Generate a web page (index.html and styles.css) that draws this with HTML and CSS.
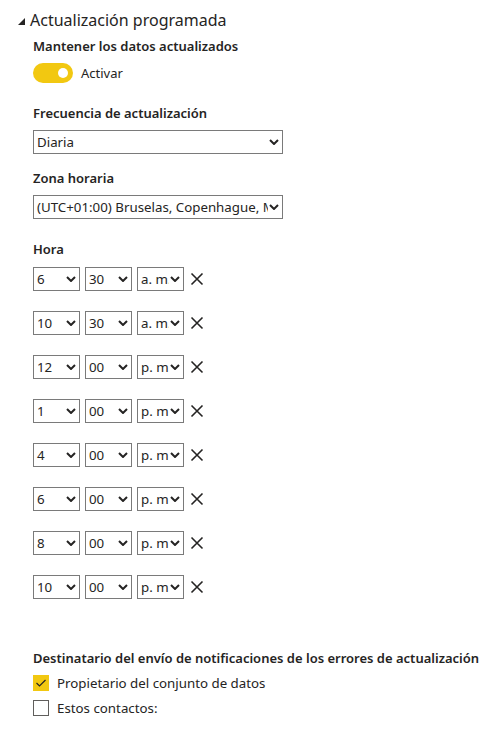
FILE: index.html
```html
<!DOCTYPE html>
<html lang="es">
<head>
<meta charset="utf-8">
<link rel="stylesheet" href="styles.css">
</head>
<body>
<div class="panel">
  <div class="section-title">
    <svg class="caret" width="7" height="7" viewBox="0 0 7 7"><path d="M7 0 L7 7 L0 7 Z" fill="#252423"/></svg>
    <span>Actualización programada</span>
  </div>
  <div class="content">
    <div class="label first">Mantener los datos actualizados</div>
    <div class="toggle-row">
      <div class="toggle"><span class="knob"></span></div>
      <span class="toggle-text">Activar</span>
    </div>

    <div class="label gap-lg">Frecuencia de actualización</div>
    <div class="select wide">
      <span class="value">Diaria</span>
      <svg class="chev" width="10" height="6" viewBox="0 0 10 6"><path d="M1 1 L5 5 L9 1" fill="none" stroke="#252423" stroke-width="2"/></svg>
    </div>

    <div class="label gap-md">Zona horaria</div>
    <div class="select wide">
      <span class="value">(UTC+01:00) Bruselas, Copenhague, Madrid, París</span>
      <svg class="chev" width="10" height="6" viewBox="0 0 10 6"><path d="M1 1 L5 5 L9 1" fill="none" stroke="#252423" stroke-width="2"/></svg>
    </div>

    <div class="label gap-lg">Hora</div>
    <div class="times">
      <div class="time-row">
        <div class="select small"><span class="value">6</span><svg class="chev" width="10" height="6" viewBox="0 0 10 6"><path d="M1 1 L5 5 L9 1" fill="none" stroke="#252423" stroke-width="2"/></svg></div>
        <div class="select small"><span class="value">30</span><svg class="chev" width="10" height="6" viewBox="0 0 10 6"><path d="M1 1 L5 5 L9 1" fill="none" stroke="#252423" stroke-width="2"/></svg></div>
        <div class="select small"><span class="value">a. m.</span><svg class="chev" width="10" height="6" viewBox="0 0 10 6"><path d="M1 1 L5 5 L9 1" fill="none" stroke="#252423" stroke-width="2"/></svg></div>
        <svg class="remove" width="14" height="14" viewBox="0 0 14 14"><path d="M1.5 1.5 L12.5 12.5 M12.5 1.5 L1.5 12.5" stroke="#252423" stroke-width="1.6"/></svg>
      </div>
      <div class="time-row">
        <div class="select small"><span class="value">10</span><svg class="chev" width="10" height="6" viewBox="0 0 10 6"><path d="M1 1 L5 5 L9 1" fill="none" stroke="#252423" stroke-width="2"/></svg></div>
        <div class="select small"><span class="value">30</span><svg class="chev" width="10" height="6" viewBox="0 0 10 6"><path d="M1 1 L5 5 L9 1" fill="none" stroke="#252423" stroke-width="2"/></svg></div>
        <div class="select small"><span class="value">a. m.</span><svg class="chev" width="10" height="6" viewBox="0 0 10 6"><path d="M1 1 L5 5 L9 1" fill="none" stroke="#252423" stroke-width="2"/></svg></div>
        <svg class="remove" width="14" height="14" viewBox="0 0 14 14"><path d="M1.5 1.5 L12.5 12.5 M12.5 1.5 L1.5 12.5" stroke="#252423" stroke-width="1.6"/></svg>
      </div>
      <div class="time-row">
        <div class="select small"><span class="value">12</span><svg class="chev" width="10" height="6" viewBox="0 0 10 6"><path d="M1 1 L5 5 L9 1" fill="none" stroke="#252423" stroke-width="2"/></svg></div>
        <div class="select small"><span class="value">00</span><svg class="chev" width="10" height="6" viewBox="0 0 10 6"><path d="M1 1 L5 5 L9 1" fill="none" stroke="#252423" stroke-width="2"/></svg></div>
        <div class="select small"><span class="value">p. m.</span><svg class="chev" width="10" height="6" viewBox="0 0 10 6"><path d="M1 1 L5 5 L9 1" fill="none" stroke="#252423" stroke-width="2"/></svg></div>
        <svg class="remove" width="14" height="14" viewBox="0 0 14 14"><path d="M1.5 1.5 L12.5 12.5 M12.5 1.5 L1.5 12.5" stroke="#252423" stroke-width="1.6"/></svg>
      </div>
      <div class="time-row">
        <div class="select small"><span class="value">1</span><svg class="chev" width="10" height="6" viewBox="0 0 10 6"><path d="M1 1 L5 5 L9 1" fill="none" stroke="#252423" stroke-width="2"/></svg></div>
        <div class="select small"><span class="value">00</span><svg class="chev" width="10" height="6" viewBox="0 0 10 6"><path d="M1 1 L5 5 L9 1" fill="none" stroke="#252423" stroke-width="2"/></svg></div>
        <div class="select small"><span class="value">p. m.</span><svg class="chev" width="10" height="6" viewBox="0 0 10 6"><path d="M1 1 L5 5 L9 1" fill="none" stroke="#252423" stroke-width="2"/></svg></div>
        <svg class="remove" width="14" height="14" viewBox="0 0 14 14"><path d="M1.5 1.5 L12.5 12.5 M12.5 1.5 L1.5 12.5" stroke="#252423" stroke-width="1.6"/></svg>
      </div>
      <div class="time-row">
        <div class="select small"><span class="value">4</span><svg class="chev" width="10" height="6" viewBox="0 0 10 6"><path d="M1 1 L5 5 L9 1" fill="none" stroke="#252423" stroke-width="2"/></svg></div>
        <div class="select small"><span class="value">00</span><svg class="chev" width="10" height="6" viewBox="0 0 10 6"><path d="M1 1 L5 5 L9 1" fill="none" stroke="#252423" stroke-width="2"/></svg></div>
        <div class="select small"><span class="value">p. m.</span><svg class="chev" width="10" height="6" viewBox="0 0 10 6"><path d="M1 1 L5 5 L9 1" fill="none" stroke="#252423" stroke-width="2"/></svg></div>
        <svg class="remove" width="14" height="14" viewBox="0 0 14 14"><path d="M1.5 1.5 L12.5 12.5 M12.5 1.5 L1.5 12.5" stroke="#252423" stroke-width="1.6"/></svg>
      </div>
      <div class="time-row">
        <div class="select small"><span class="value">6</span><svg class="chev" width="10" height="6" viewBox="0 0 10 6"><path d="M1 1 L5 5 L9 1" fill="none" stroke="#252423" stroke-width="2"/></svg></div>
        <div class="select small"><span class="value">00</span><svg class="chev" width="10" height="6" viewBox="0 0 10 6"><path d="M1 1 L5 5 L9 1" fill="none" stroke="#252423" stroke-width="2"/></svg></div>
        <div class="select small"><span class="value">p. m.</span><svg class="chev" width="10" height="6" viewBox="0 0 10 6"><path d="M1 1 L5 5 L9 1" fill="none" stroke="#252423" stroke-width="2"/></svg></div>
        <svg class="remove" width="14" height="14" viewBox="0 0 14 14"><path d="M1.5 1.5 L12.5 12.5 M12.5 1.5 L1.5 12.5" stroke="#252423" stroke-width="1.6"/></svg>
      </div>
      <div class="time-row">
        <div class="select small"><span class="value">8</span><svg class="chev" width="10" height="6" viewBox="0 0 10 6"><path d="M1 1 L5 5 L9 1" fill="none" stroke="#252423" stroke-width="2"/></svg></div>
        <div class="select small"><span class="value">00</span><svg class="chev" width="10" height="6" viewBox="0 0 10 6"><path d="M1 1 L5 5 L9 1" fill="none" stroke="#252423" stroke-width="2"/></svg></div>
        <div class="select small"><span class="value">p. m.</span><svg class="chev" width="10" height="6" viewBox="0 0 10 6"><path d="M1 1 L5 5 L9 1" fill="none" stroke="#252423" stroke-width="2"/></svg></div>
        <svg class="remove" width="14" height="14" viewBox="0 0 14 14"><path d="M1.5 1.5 L12.5 12.5 M12.5 1.5 L1.5 12.5" stroke="#252423" stroke-width="1.6"/></svg>
      </div>
      <div class="time-row">
        <div class="select small"><span class="value">10</span><svg class="chev" width="10" height="6" viewBox="0 0 10 6"><path d="M1 1 L5 5 L9 1" fill="none" stroke="#252423" stroke-width="2"/></svg></div>
        <div class="select small"><span class="value">00</span><svg class="chev" width="10" height="6" viewBox="0 0 10 6"><path d="M1 1 L5 5 L9 1" fill="none" stroke="#252423" stroke-width="2"/></svg></div>
        <div class="select small"><span class="value">p. m.</span><svg class="chev" width="10" height="6" viewBox="0 0 10 6"><path d="M1 1 L5 5 L9 1" fill="none" stroke="#252423" stroke-width="2"/></svg></div>
        <svg class="remove" width="14" height="14" viewBox="0 0 14 14"><path d="M1.5 1.5 L12.5 12.5 M12.5 1.5 L1.5 12.5" stroke="#252423" stroke-width="1.6"/></svg>
      </div>
    </div>

    <div class="label gap-xl">Destinatario del envío de notificaciones de los errores de actualización</div>
    <div class="check-row">
      <span class="checkbox checked"><svg width="12" height="10" viewBox="0 0 12 10"><path d="M1.5 5 L4.5 8 L10.5 2" fill="none" stroke="#252423" stroke-width="1.2"/></svg></span>
      <span class="check-text">Propietario del conjunto de datos</span>
    </div>
    <div class="check-row">
      <span class="checkbox"></span>
      <span class="check-text">Estos contactos:</span>
    </div>
  </div>
</div>
</body>
</html>
```

FILE: styles.css
```css
html, body {
  margin: 0;
  padding: 0;
  background: #ffffff;
}
body {
  font-family: "Noto Sans", "Open Sans", sans-serif;
  color: #252423;
  width: 492px;
  height: 729px;
  overflow: hidden;
}
.panel {
  padding-top: 8px;
}
.section-title {
  display: flex;
  align-items: center;
  height: 24px;
  padding-left: 18px;
  font-size: 16px;
  color: #252423;
}
.caret {
  margin-right: 5px;
  margin-top: 3px;
}
.content {
  padding-left: 33px;
}
.label {
  font-size: 13px;
  font-weight: 600;
  line-height: 20px;
  height: 20px;
  white-space: nowrap;
}
.label.first { margin-top: 4px; }
.label.gap-lg { margin-top: 20px; }
.label.gap-md { margin-top: 14px; }
.label.gap-xl { margin-top: 49px; }
.toggle-row {
  display: flex;
  align-items: center;
  margin-top: 7px;
  height: 20px;
}
.toggle {
  width: 40px;
  height: 20px;
  border-radius: 10px;
  background: #f2c811;
  position: relative;
}
.knob {
  position: absolute;
  width: 10px;
  height: 10px;
  border-radius: 50%;
  background: #ffffff;
  top: 5px;
  left: 25px;
}
.toggle-text {
  font-size: 13px;
  margin-left: 8px;
}
.select {
  display: flex;
  align-items: center;
  box-sizing: border-box;
  height: 24px;
  border: 1px solid #7a7a7a;
  background: #fff;
  font-size: 13.3px;
  margin-top: 7px;
}
.select .value {
  flex: 1;
  min-width: 0;
  overflow: hidden;
  white-space: nowrap;
  padding-left: 3px;
}
.select .chev {
  flex: none;
  margin: 0 3px 0 1px;
}
.select.wide {
  width: 250px;
}
.times {
  margin-top: 8px;
  display: flex;
  flex-direction: column;
  gap: 20px;
}
.time-row {
  display: flex;
  align-items: center;
  gap: 5px;
  height: 24px;
}
.select.small {
  width: 47px;
  margin-top: 0;
}
.remove {
  margin-left: 1px;
}
.check-row {
  display: flex;
  align-items: center;
  height: 20px;
  margin-top: 5px;
}
.checkbox {
  box-sizing: border-box;
  width: 16px;
  height: 16px;
  border: 1px solid #605e5c;
  display: flex;
  align-items: center;
  justify-content: center;
  background: #fff;
}
.checkbox.checked {
  background: #f2c811;
  border-color: #f2c811;
}
.check-text {
  font-size: 13.3px;
  margin-left: 8px;
}
```
